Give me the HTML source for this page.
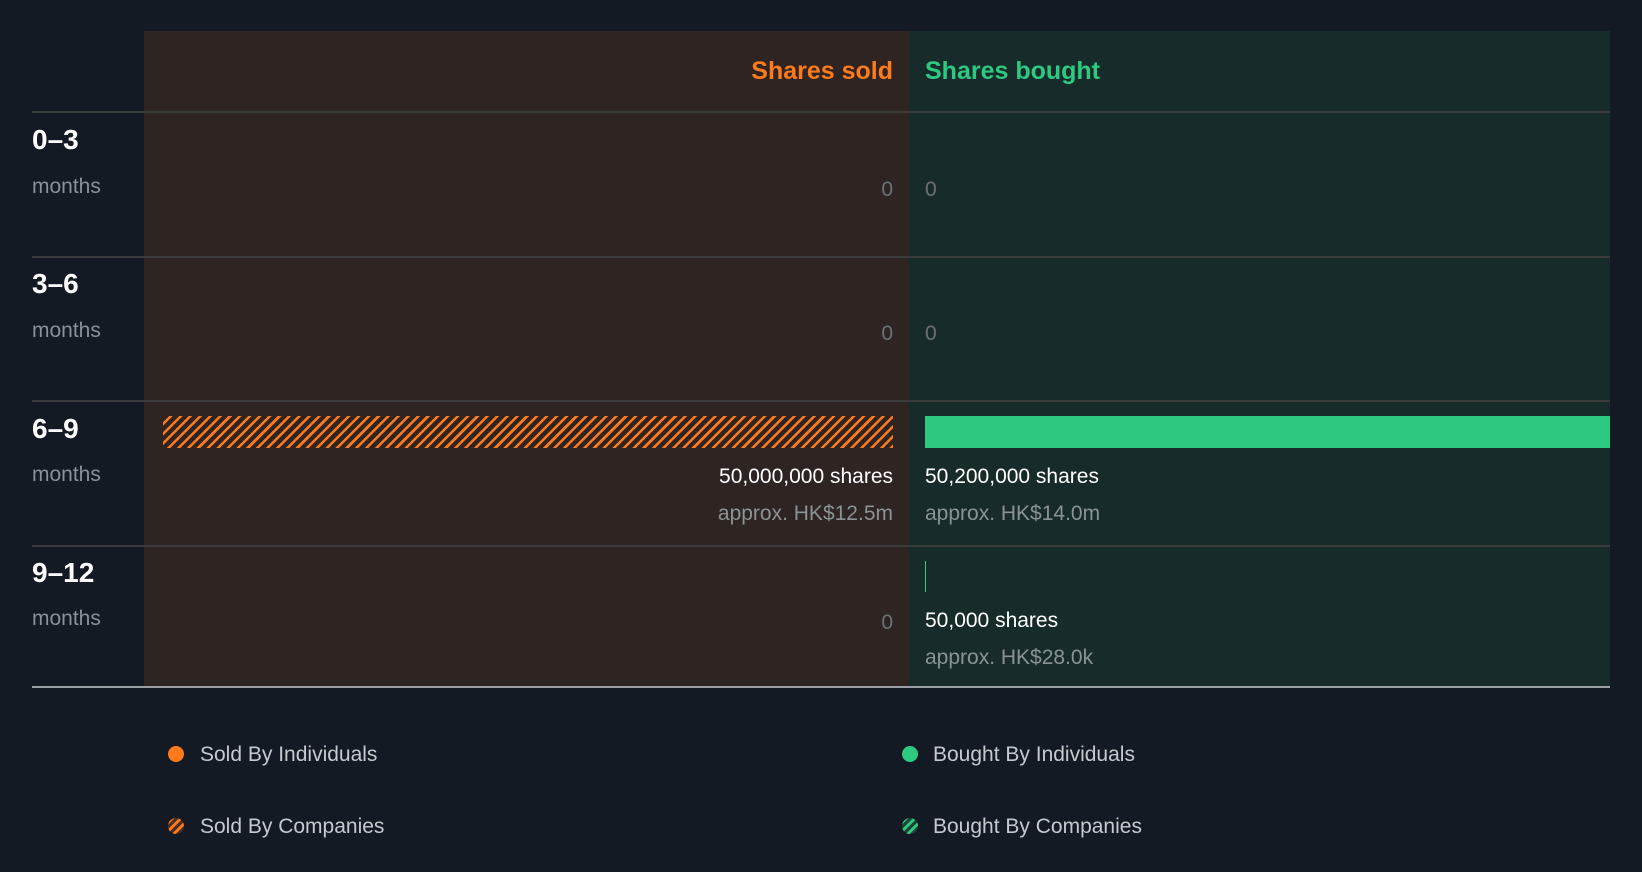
<!DOCTYPE html>
<html><head><style>
body{margin:0;width:1642px;height:872px;background:#141a23;font-family:"Liberation Sans",sans-serif;position:relative;overflow:hidden}
div,span{position:absolute}
.pl{left:144px;width:765px;top:31px;height:656px;background:#2e2422}
.pr{left:909px;width:701px;top:31px;height:656px;background:#172b2b}
.ln{left:32px;width:1578px;height:2px;background:#3a3c3c}
.rl{left:32px;font-weight:bold;color:#fff;font-size:28px}
.mo{left:32px;color:#8a9099;font-size:21px}
.z{color:#6b7275;font-size:21px}
.L{right:749px;text-align:right;white-space:nowrap}
.R{left:925px;white-space:nowrap}
.w{color:#fff;font-size:21px}
.g{color:#8a9294;font-size:21px}
.lg{color:#c6c9cd;font-size:21px;white-space:nowrap}
.dot{width:16px;height:16px;border-radius:50%}
</style></head><body>
<div class="pl"></div><div class="pr"></div>
<span style="right:749px;top:57px;font-size:25px;font-weight:bold;color:#ff7a1a">Shares sold</span>
<span style="left:925px;top:57px;font-size:25px;font-weight:bold;color:#2ec980">Shares bought</span>
<div class="ln" style="top:111px"></div>
<div class="ln" style="top:256px"></div>
<div class="ln" style="top:400px"></div>
<div class="ln" style="top:545px"></div>
<div class="ln" style="top:686px;background:#9aa0a6"></div>

<span class="rl" style="top:124px">0–3</span><span class="mo" style="top:175px">months</span>
<span class="rl" style="top:268px">3–6</span><span class="mo" style="top:319px">months</span>
<span class="rl" style="top:413px">6–9</span><span class="mo" style="top:463px">months</span>
<span class="rl" style="top:557px">9–12</span><span class="mo" style="top:607px">months</span>

<span class="z L" style="top:178px">0</span><span class="z R" style="top:178px">0</span>
<span class="z L" style="top:322px">0</span><span class="z R" style="top:322px">0</span>
<span class="z L" style="top:611px">0</span>

<div style="left:163px;width:730px;top:416px;height:32px;background:repeating-linear-gradient(-45deg,#ff7a1a 0 2.5px,transparent 2.5px 7px)"></div>
<div style="left:925px;width:685px;top:416px;height:32px;background:#2ec980"></div>
<span class="w L" style="top:465px">50,000,000 shares</span>
<span class="g L" style="top:502px">approx. HK$12.5m</span>
<span class="w R" style="top:465px">50,200,000 shares</span>
<span class="g R" style="top:502px">approx. HK$14.0m</span>

<div style="left:925px;width:1px;top:561px;height:31px;background:#2ec980"></div>
<span class="w R" style="top:609px">50,000 shares</span>
<span class="g R" style="top:646px">approx. HK$28.0k</span>

<div class="dot" style="left:168px;top:746px;background:#ff7a1a"></div>
<span class="lg" style="left:200px;top:743px">Sold By Individuals</span>
<div class="dot" style="left:168px;top:818px;background:repeating-linear-gradient(-45deg,#ff7a1a 0 2.5px,#4a3020 2.5px 6px)"></div>
<span class="lg" style="left:200px;top:815px">Sold By Companies</span>
<div class="dot" style="left:902px;top:746px;background:#2ec980"></div>
<span class="lg" style="left:933px;top:743px">Bought By Individuals</span>
<div class="dot" style="left:902px;top:818px;background:repeating-linear-gradient(-45deg,#2ec980 0 2.5px,#1d4438 2.5px 6px)"></div>
<span class="lg" style="left:933px;top:815px">Bought By Companies</span>
</body></html>
